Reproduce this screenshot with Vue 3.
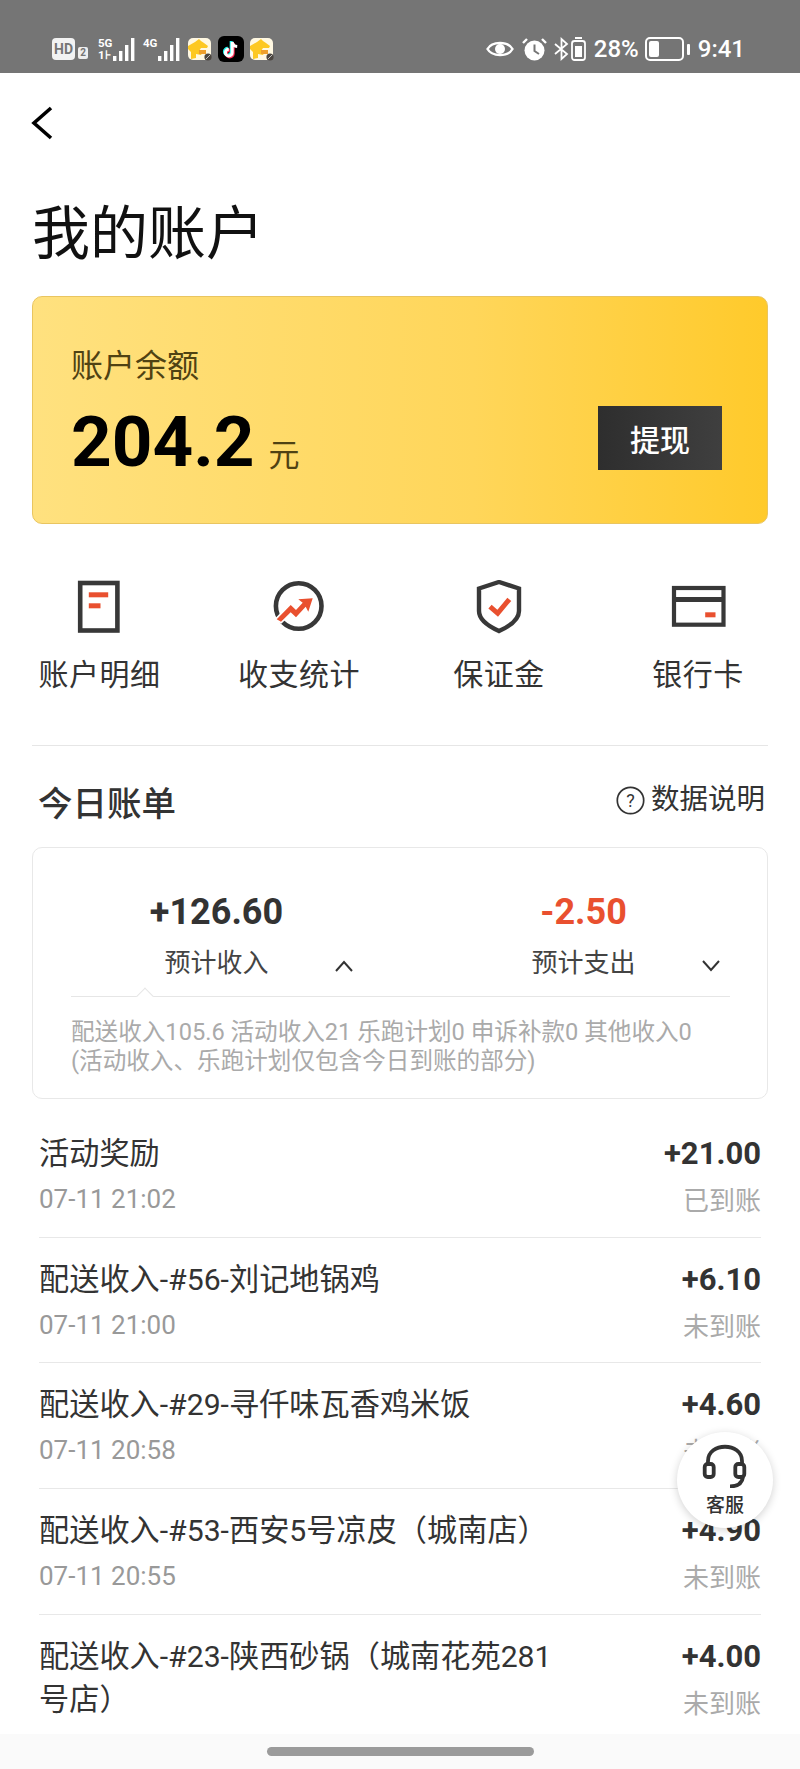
<template>
  <div class="app">
    <div class="status-bar">
      <div class="status-left">
        <span class="hd">HD</span>
        <span class="hd-two">2</span>
        <div class="net">
          <div class="net-text"><span>5G</span><span>1⊦</span></div>
          <svg width="22" height="23" viewBox="0 0 22 23"><rect x="0" y="18" width="3.4" height="5" /><rect x="6" y="13" width="3.4" height="10" /><rect x="12" y="7" width="3.4" height="16" /><rect x="18" y="0" width="3.4" height="23" /></svg>
        </div>
        <div class="net net-b">
          <div class="net-text"><span>4G</span><span>&nbsp;</span></div>
          <svg width="22" height="23" viewBox="0 0 22 23"><rect x="0" y="18" width="3.4" height="5" /><rect x="6" y="13" width="3.4" height="10" /><rect x="12" y="7" width="3.4" height="16" /><rect x="18" y="0" width="3.4" height="23" /></svg>
        </div>
        <svg class="app-icon" width="24" height="23" viewBox="0 0 24 23">
          <rect width="23" height="22" rx="5" fill="#fff8e2" />
          <path d="M0 8 L7 4 L11 1 L13 3 L16 5 L20 8 L19 10 L13 10 L11 13 L16 12 L13 17 L8 16 L8 20 L3 21 L3 14 L0 11 Z" fill="#fdc822" />
          <rect x="11" y="12" width="7" height="4" fill="#ee9f2c" />
          <circle cx="20" cy="19" r="3.6" fill="#4c4640" />
          <path d="M18 21 L22 17" stroke="#ddd" stroke-width="0.8" />
        </svg>
        <svg class="tiktok" width="26" height="26" viewBox="0 0 26 26">
          <rect width="26" height="26" rx="6" fill="#000" />
          <path d="M14.2 6 V16.6 A3.4 3.4 0 1 1 10.8 13.2" fill="none" stroke="#25f4ee" stroke-width="3" transform="translate(-1 -1)" />
          <path d="M14.2 6 V16.6 A3.4 3.4 0 1 1 10.8 13.2" fill="none" stroke="#fe2c55" stroke-width="3" transform="translate(1 1)" />
          <path d="M14.2 6 V16.6 A3.4 3.4 0 1 1 10.8 13.2 M14.2 6 C14.8 9 16.6 10.4 19.2 10.6" fill="none" stroke="#fff" stroke-width="3" />
        </svg>
        <svg class="app-icon" width="24" height="23" viewBox="0 0 24 23">
          <rect width="23" height="22" rx="5" fill="#fff8e2" />
          <path d="M0 8 L7 4 L11 1 L13 3 L16 5 L20 8 L19 10 L13 10 L11 13 L16 12 L13 17 L8 16 L8 20 L3 21 L3 14 L0 11 Z" fill="#fdc822" />
          <rect x="11" y="12" width="7" height="4" fill="#ee9f2c" />
          <circle cx="20" cy="19" r="3.6" fill="#4c4640" />
          <path d="M18 21 L22 17" stroke="#ddd" stroke-width="0.8" />
        </svg>
      </div>
      <div class="status-right">
        <svg width="28" height="22" viewBox="0 0 28 22"><path d="M1.5 11 C6 3 22 3 26.5 11 C22 19 6 19 1.5 11 Z" fill="none" stroke="#fff" stroke-width="2.4" /><circle cx="14" cy="11" r="5" fill="#fff" /></svg>
        <svg class="alarm" width="25" height="24" viewBox="0 0 25 24">
          <circle cx="12.5" cy="13.5" r="10" fill="#fff" />
          <path d="M12.5 7.5 V14 L17 17" fill="none" stroke="#757575" stroke-width="2" />
          <path d="M1 6 L5 2 M24 6 L20 2" stroke="#fff" stroke-width="2.4" />
        </svg>
        <svg class="bt" width="15" height="24" viewBox="0 0 15 24"><path d="M1 7 L13 17 L7.5 22 V2 L13 7 L1 17" fill="none" stroke="#fff" stroke-width="1.8" /></svg>
        <svg class="mini-batt" width="15" height="24" viewBox="0 0 15 24"><rect x="4" y="0" width="7" height="2" fill="#fff" /><rect x="1" y="4" width="13" height="19" rx="2.5" fill="none" stroke="#fff" stroke-width="1.8" /><rect x="4" y="9" width="7" height="11" fill="#fff" /></svg>
        <span class="pct">28%</span>
        <svg class="batt" width="45" height="24" viewBox="0 0 45 24"><rect x="1" y="1" width="37" height="22" rx="4" fill="none" stroke="#fff" stroke-width="2" /><rect x="4" y="4" width="10" height="16" rx="2" fill="#fff" /><rect x="42" y="7" width="3" height="11" rx="1" fill="#fff" /></svg>
        <span class="time">9:41</span>
      </div>
    </div>

    <div class="nav">
      <svg width="22" height="34" viewBox="0 0 22 34"><path d="M20 2 L3 17 L20 32" fill="none" stroke="#000" stroke-width="3.6" /></svg>
    </div>
    <h1 class="title">我的账户</h1>

    <div class="balance-card">
      <div class="balance-label">账户余额</div>
      <div class="balance-row">
        <div class="amount">204.2<span class="unit">元</span></div>
        <button class="withdraw">提现</button>
      </div>
    </div>

    <div class="shortcuts">
      <div class="shortcut">
        <svg width="60" height="56" viewBox="0 0 60 56">
          <rect x="10.2" y="3" width="37.2" height="47.5" fill="none" stroke="#383838" stroke-width="4.6" />
          <rect x="18.8" y="12.3" width="19.4" height="5" fill="#e9502f" />
          <rect x="18.8" y="23.3" width="11.7" height="5" fill="#e9502f" />
        </svg>
        <span>账户明细</span>
      </div>
      <div class="shortcut">
        <svg width="60" height="56" viewBox="0 0 60 56">
          <circle cx="29.7" cy="26" r="22.8" fill="none" stroke="#383838" stroke-width="4.6" />
          <path d="M7.7 39.3 L21.7 25 L27 30 L33.7 22.7 L29.3 19.3 L43.7 18.3 L39.3 31.7 L36.7 26.7 L27 37.3 L21.7 32.3 L12 41.7 Z" fill="#fff" stroke="#fff" stroke-width="3.4" />
          <path d="M7.7 39.3 L21.7 25 L27 30 L33.7 22.7 L29.3 19.3 L43.7 18.3 L39.3 31.7 L36.7 26.7 L27 37.3 L21.7 32.3 L12 41.7 Z" fill="#e9502f" />
        </svg>
        <span>收支统计</span>
      </div>
      <div class="shortcut">
        <svg width="60" height="56" viewBox="0 0 60 56">
          <path d="M30 2 L50 8.5 V31 C50 40 40 46.5 30 51 C20 46.5 10 40 10 31 V8.5 Z" fill="none" stroke="#383838" stroke-width="4.4" />
          <path d="M21 26.7 L28.7 33.3 L40.3 19.3" fill="none" stroke="#e9502f" stroke-width="5" />
        </svg>
        <span>保证金</span>
      </div>
      <div class="shortcut">
        <svg width="60" height="56" viewBox="0 0 60 56">
          <rect x="6" y="8" width="49.5" height="36.7" fill="none" stroke="#383838" stroke-width="4.2" />
          <rect x="4" y="17" width="53" height="5" fill="#383838" />
          <rect x="37.2" y="32.3" width="10.3" height="5" fill="#e9502f" />
        </svg>
        <span>银行卡</span>
      </div>
    </div>

    <div class="divider"></div>

    <div class="bill-head">
      <span class="bill-title">今日账单</span>
      <span class="bill-help">
        <svg width="29" height="29" viewBox="0 0 29 29"><circle cx="14.5" cy="14.5" r="13.2" fill="none" stroke="#333" stroke-width="1.7" /><text x="14.5" y="21" text-anchor="middle" font-size="18" fill="#333" font-family="Roboto, sans-serif">?</text></svg>
        数据说明
      </span>
    </div>

    <div class="summary">
      <div class="stats">
        <div class="stat">
          <div class="stat-num">+126.60</div>
          <div class="stat-label">
            <span class="stat-text">预计收入</span>
            <svg class="chev" width="20" height="12" viewBox="0 0 20 12"><path d="M2 11 L10 2 L18 11" fill="none" stroke="#333" stroke-width="2" /></svg>
          </div>
        </div>
        <div class="stat">
          <div class="stat-num red">-2.50</div>
          <div class="stat-label">
            <span class="stat-text">预计支出</span>
            <svg class="chev" width="20" height="12" viewBox="0 0 20 12"><path d="M2 1 L10 10 L18 1" fill="none" stroke="#333" stroke-width="2" /></svg>
          </div>
        </div>
      </div>
      <div class="sum-line"><i class="caret"></i></div>
      <div class="sum-desc">
        配送收入105.6 活动收入21 乐跑计划0 申诉补款0 其他收入0<br />
        (活动收入、乐跑计划仅包含今日到账的部分)
      </div>
    </div>

    <div class="rows">
      <div v-for="item in items" :key="item.name" class="row">
        <div class="row-main">
          <div class="row-name">{{ item.name }}</div>
          <div v-if="item.time" class="row-time">{{ item.time }}</div>
        </div>
        <div class="row-side">
          <div class="row-amount">{{ item.amount }}</div>
          <div class="row-state">{{ item.state }}</div>
        </div>
      </div>
    </div>

    <div class="home-bar"><i></i></div>

    <div class="service">
      <svg width="46" height="44" viewBox="0 0 46 44">
        <path d="M6 20 V17 C6 -2 40 -2 40 17 V20" fill="none" stroke="#333" stroke-width="3.8" />
        <rect x="2.7" y="20" width="9" height="13" rx="3" fill="none" stroke="#333" stroke-width="3.8" />
        <rect x="33.3" y="20" width="9" height="13" rx="3" fill="none" stroke="#333" stroke-width="3.8" />
        <path d="M41 33 C40 40 35 42.4 28 42.4" fill="none" stroke="#333" stroke-width="3.8" />
      </svg>
      <span>客服</span>
    </div>
  </div>
</template>

<script setup>
const items = [
  { name: '活动奖励', time: '07-11 21:02', amount: '+21.00', state: '已到账' },
  { name: '配送收入-#56-刘记地锅鸡', time: '07-11 21:00', amount: '+6.10', state: '未到账' },
  { name: '配送收入-#29-寻仟味瓦香鸡米饭', time: '07-11 20:58', amount: '+4.60', state: '未到账' },
  { name: '配送收入-#53-西安5号凉皮（城南店）', time: '07-11 20:55', amount: '+4.90', state: '未到账' },
  { name: '配送收入-#23-陕西砂锅（城南花苑281号店）', time: '', amount: '+4.00', state: '未到账' }
]
</script>

<style>
html, body { margin: 0; background: #fff; }
</style>

<style scoped>
.app {
  position: relative;
  width: 800px;
  height: 1769px;
  overflow: hidden;
  background: #fff;
  color: #333;
  font-family: Roboto, "Noto Sans CJK SC", sans-serif;
}

/* status bar */
.status-bar {
  height: 73px;
  box-sizing: border-box;
  padding: 36px 55px 0 52px;
  background: #757575;
  color: #fff;
  display: flex;
  justify-content: space-between;
}
.status-left, .status-right { display: flex; align-items: center; height: 26px; }
.net svg { fill: #fff; }
.hd {
  width: 23px;
  height: 22px;
  border-radius: 4px;
  background: #f2f2f2;
  color: #757575;
  font-size: 14px;
  font-weight: 700;
  line-height: 22px;
  text-align: center;
}
.hd-two {
  width: 10px;
  height: 12px;
  margin: 8px 0 0 3px;
  border-radius: 2px;
  background: #eee;
  color: #757575;
  font-size: 10px;
  font-weight: 700;
  line-height: 12px;
  text-align: center;
}
.net { display: flex; align-items: flex-end; margin-left: 10px; height: 23px; }
.net-b { margin-left: 8px; }
.net-text {
  width: 15px;
  display: flex;
  flex-direction: column;
  font-size: 11.5px;
  font-weight: 700;
  line-height: 12px;
}
.app-icon { margin-left: 8px; }
.tiktok { margin-left: 6px; }
.tiktok + .app-icon { margin-left: 6px; }
.alarm { margin-left: 8px; }
.bt { margin-left: 7px; }
.mini-batt { margin-left: 2px; }
.pct { margin-left: 8px; font-size: 24px; font-weight: 500; }
.batt { margin-left: 6px; }
.time { margin-left: 8px; font-size: 24px; font-weight: 500; }

/* header */
.nav {
  height: 129px;
  box-sizing: border-box;
  padding: 33px 0 0 31px;
}
.nav svg { display: block; }
.title {
  margin: 0 0 30px 32px;
  font-size: 58px;
  font-weight: 400;
  line-height: 64px;
  color: #111;
}

/* balance */
.balance-card {
  box-sizing: border-box;
  width: 736px;
  height: 228px;
  margin-left: 32px;
  padding: 49px 45px 0 38px;
  border: 1.5px solid #e9c560;
  border-radius: 10px;
  background: linear-gradient(90deg, #ffe17f, #ffd65a 60%, #ffca2b);
}
.balance-label {
  font-size: 32px;
  line-height: 40px;
  color: #4f4213;
}
.balance-row {
  display: flex;
  justify-content: space-between;
  align-items: flex-start;
  margin-top: 16px;
}
.amount {
  font-size: 71px;
  font-weight: 700;
  line-height: 80px;
  color: #000;
}
.unit {
  margin-left: 14px;
  font-size: 31px;
  font-weight: 400;
  color: #4f4213;
}
.withdraw {
  width: 124px;
  height: 64px;
  margin-top: 4px;
  padding: 0;
  border: 0;
  background: linear-gradient(90deg, #2e2e2e, #3f3f3f);
  color: #fff;
  font-family: inherit;
  font-size: 30px;
  font-weight: 500;
}

/* shortcuts */
.shortcuts {
  display: grid;
  grid-template-columns: 197px 202px 198px 200px;
  margin: 56px 0 0 1px;
}
.shortcut {
  display: flex;
  flex-direction: column;
  align-items: center;
  gap: 17px;
  font-size: 30px;
  line-height: 44px;
  color: #333;
}
.shortcut span { letter-spacing: 0.5px; }

.divider {
  width: 736px;
  height: 1px;
  margin: 48px 0 0 32px;
  background: #e6e6e6;
}

/* bill */
.bill-head {
  display: flex;
  justify-content: space-between;
  align-items: flex-start;
  height: 101px;
  padding: 36px 35px 0 38px;
  box-sizing: border-box;
}
.bill-title { font-size: 34.5px; line-height: 44px; font-weight: 500; color: #333; }
.bill-help {
  display: flex;
  align-items: center;
  gap: 6px;
  margin-top: 1px;
  font-size: 28.5px;
  line-height: 34px;
  color: #333;
}

.summary {
  box-sizing: border-box;
  width: 736px;
  height: 252px;
  margin-left: 32px;
  border: 1px solid #e8e8e8;
  border-radius: 10px;
}
.stats {
  display: grid;
  grid-template-columns: 367px 367px;
  padding-top: 42px;
}
.stat-num {
  font-size: 36px;
  font-weight: 700;
  line-height: 44px;
  text-align: center;
  color: #333;
}
.stat-num.red { color: #e9502f; }
.stat-label {
  display: grid;
  grid-template-columns: 1fr auto 1fr;
  align-items: center;
  margin-top: 9px;
  height: 40px;
}
.stat-text {
  grid-column: 2;
  font-size: 26px;
  line-height: 40px;
  color: #444;
}
.chev { grid-column: 3; margin: 5px 0 0 65px; }
.sum-line {
  position: relative;
  height: 1px;
  margin: 13px 37px 0 38px;
  background: #e6e6e6;
}
.caret {
  position: absolute;
  left: 68px;
  top: -6px;
  width: 11px;
  height: 11px;
  background: #fff;
  border-left: 1px solid #e6e6e6;
  border-top: 1px solid #e6e6e6;
  transform: rotate(45deg);
}
.sum-desc {
  margin: 21px 0 0 38px;
  font-size: 23.6px;
  line-height: 29px;
  color: #aaa;
  white-space: nowrap;
}

.rows { margin: 13px 39px 0; }
.row {
  box-sizing: border-box;
  min-height: 125.67px;
  padding-top: 20px;
  display: flex;
  justify-content: space-between;
  border-bottom: 1px solid #e8e8e8;
}
.row:last-child { border-bottom: 0; min-height: 119px; }
.row-main { width: 530px; }
.row-name { font-size: 30.2px; line-height: 43px; color: #333; }
.row-time { margin-top: 6px; font-size: 26px; line-height: 36px; color: #999; }
.row-side { text-align: right; }
.row-amount { font-size: 31px; font-weight: 700; line-height: 44px; color: #333; }
.row-state { margin-top: 7px; font-size: 26px; line-height: 36px; color: #aaa; }

.home-bar {
  height: 36px;
  background: #fafafa;
  display: flex;
  justify-content: center;
  align-items: flex-end;
}
.home-bar i {
  display: block;
  width: 267px;
  height: 9px;
  margin-bottom: 14px;
  border-radius: 5px;
  background: #9b9b9b;
}

.service {
  position: absolute;
  left: 677px;
  top: 1432px;
  width: 96px;
  height: 96px;
  box-sizing: border-box;
  padding-top: 12px;
  border-radius: 50%;
  background: #fff;
  box-shadow: 0 2px 8px rgba(0, 0, 0, 0.18);
  display: flex;
  flex-direction: column;
  align-items: center;
  gap: 6px;
  font-size: 19px;
  font-weight: 500;
  line-height: 24px;
  color: #333;
}
.service svg { display: block; }
</style>
